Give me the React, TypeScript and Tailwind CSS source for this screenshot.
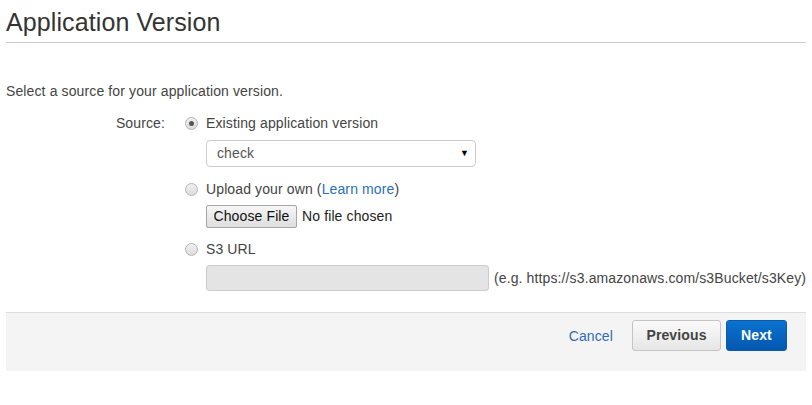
import React from "react";

function Radio({ checked }: { checked?: boolean }) {
  return (
    <span className="inline-flex h-[13px] w-[13px] items-center justify-center rounded-full border border-[#b5b5b5] bg-gradient-to-b from-[#f0f0f0] to-[#dcdcdc]">
      {checked && <span className="h-[5px] w-[5px] rounded-full bg-[#555]" />}
    </span>
  );
}

export default function App() {
  return (
    <div className="w-[812px] h-[405px] bg-white text-[14px] tracking-[0.12px] text-[#444]" style={{ fontFamily: '"Liberation Sans", Arial, sans-serif' }}>
      <div className="mx-[6px] w-[800px]">
        <h1 className="pt-[8px] text-[25px] leading-[28px] tracking-[0.1px] text-[#333] font-normal">Application Version</h1>
        <div className="mt-[6px] h-px bg-[#ccc]" />
        <p className="mt-[40px] leading-[16px]">Select a source for your application version.</p>

        <div className="mt-[16px] flex">
          <div className="w-[159px] shrink-0 text-right leading-[16px]">Source:</div>
          <div className="ml-[20px] flex flex-1 flex-col whitespace-nowrap">
            <div className="flex items-center gap-[8px] leading-[16px]">
              <Radio checked />
              <span>Existing application version</span>
            </div>
            <div className="ml-[21px] mt-[9px] flex h-[27px] w-[270px] items-center justify-between rounded-[4px] border border-[#ccc] bg-white pl-[10px] pr-[6px] text-[#555]">
              <span>check</span>
              <span className="text-[9px] text-black">▼</span>
            </div>

            <div className="mt-[14px] flex items-center gap-[8px] leading-[16px]">
              <Radio />
              <span>
                Upload your own (<span className="text-[#2a6fb8]">Learn more</span>)
              </span>
            </div>
            <div className="ml-[21px] mt-[8px] flex items-center">
              <span className="flex h-[23px] w-[91px] items-center justify-center rounded-[2px] border border-[#a6a6a6] bg-gradient-to-b from-[#f6f6f6] to-[#dedede] text-[#111]">Choose File</span>
              <span className="ml-[5px] text-[#222]">No file chosen</span>
            </div>

            <div className="mt-[13px] flex items-center gap-[8px] leading-[16px]">
              <Radio />
              <span>S3 URL</span>
            </div>
            <div className="ml-[21px] mt-[8px] flex items-center">
              <div className="h-[26px] w-[283px] shrink-0 rounded-[3px] border border-[#ccc] bg-[#e4e4e4]" />
              <span className="ml-[5px] whitespace-nowrap">(e.g. https://s3.amazonaws.com/s3Bucket/s3Key)</span>
            </div>
          </div>
        </div>

        <div className="mt-[21px] flex h-[59px] items-start justify-end border-t border-[#ddd] bg-[#f4f4f4] pr-[19px] pt-[7px]">
          <span className="mt-[8px] leading-[16px] text-[#2f6db5]">Cancel</span>
          <span className="ml-[19px] flex h-[31px] w-[89px] items-center justify-center rounded-[3px] border border-[#c4c4c4] bg-gradient-to-b from-[#fafafa] to-[#e6e6e6] font-bold text-[#444]">Previous</span>
          <span className="ml-[5px] flex h-[31px] w-[61px] items-center justify-center rounded-[3px] border border-[#0a5aa8] bg-gradient-to-b from-[#0a72cf] to-[#0558b0] font-bold text-white">Next</span>
        </div>
      </div>
    </div>
  );
}
